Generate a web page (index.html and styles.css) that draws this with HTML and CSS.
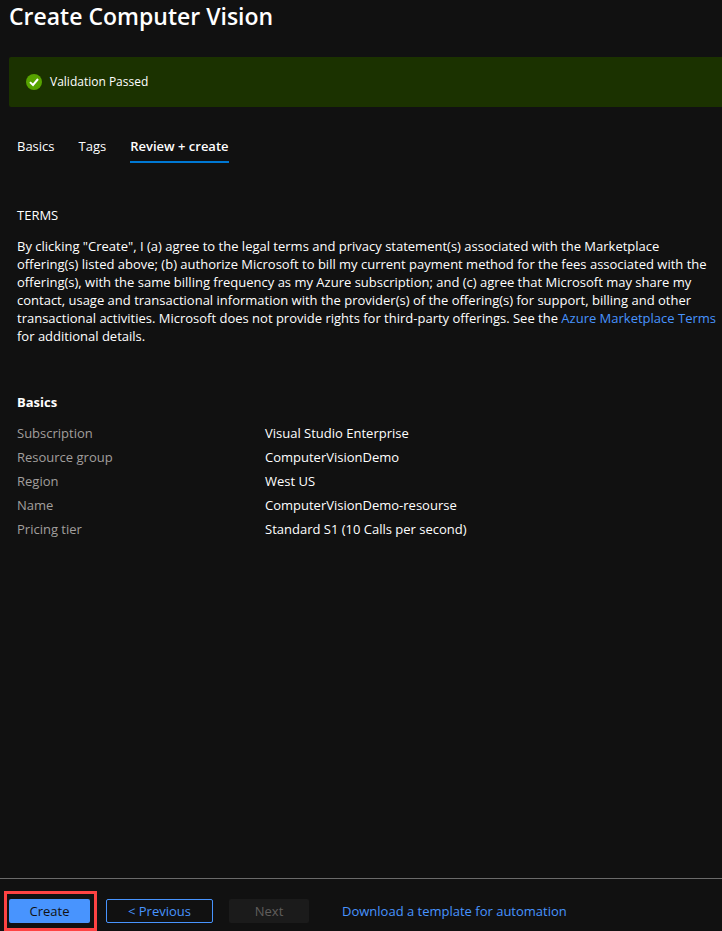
FILE: index.html
```html
<!DOCTYPE html>
<html lang="en">
<head>
<meta charset="utf-8">
<meta name="viewport" content="width=device-width, initial-scale=1">
<title>Create Computer Vision</title>
<link rel="stylesheet" href="styles.css">
</head>
<body>
<div class="page">
  <header class="header">
    <h1 class="title">Create Computer Vision</h1>
    <div class="banner" role="status">
      <svg class="banner-icon" viewBox="0 0 16 16" aria-hidden="true">
        <circle cx="8" cy="8" r="8" fill="#57a300"/>
        <path d="M4 8.1 7 11 12 5" fill="none" stroke="#fff" stroke-width="2"/>
      </svg>
      <span class="banner-text">Validation Passed</span>
    </div>
  </header>
  <main class="content">
    <nav class="tabs" aria-label="Steps">
      <a class="tab" href="#basics">Basics</a>
      <a class="tab" href="#tags">Tags</a>
      <a class="tab tab-active" href="#review" aria-current="step">Review + create</a>
    </nav>
    <section class="terms">
      <h2 class="terms-title">TERMS</h2>
      <p class="terms-text">By clicking "Create", I (a) agree to the legal terms and privacy statement(s) associated with the Marketplace<br>
      offering(s) listed above; (b) authorize Microsoft to bill my current payment method for the fees associated with the<br>
      offering(s), with the same billing frequency as my Azure subscription; and (c) agree that Microsoft may share my<br>
      contact, usage and transactional information with the provider(s) of the offering(s) for support, billing and other<br>
      transactional activities. Microsoft does not provide rights for third-party offerings. See the <a class="link" href="#marketplace-terms">Azure Marketplace Terms</a><br>
      for additional details.</p>
    </section>
    <section class="summary">
      <h2 class="summary-title">Basics</h2>
      <dl class="details">
        <dt>Subscription</dt><dd>Visual Studio Enterprise</dd>
        <dt>Resource group</dt><dd>ComputerVisionDemo</dd>
        <dt>Region</dt><dd>West US</dd>
        <dt>Name</dt><dd>ComputerVisionDemo-resourse</dd>
        <dt>Pricing tier</dt><dd>Standard S1 (10 Calls per second)</dd>
      </dl>
    </section>
  </main>
  <footer class="footer">
    <div class="highlight"><button class="button button-primary" type="button">Create</button></div>
    <button class="button button-secondary" type="button">&lt; Previous</button>
    <button class="button button-next" type="button" disabled>Next</button>
    <a class="link footer-link" href="#template">Download a template for automation</a>
  </footer>
</div>
</body>
</html>
```
FILE: styles.css
```css
* {
  box-sizing: border-box;
}

body {
  margin: 0;
  background: #111111;
  color: #ffffff;
  font: 13px/18px "Open Sans", "Noto Sans", sans-serif;
}

h1, h2, p, dl, dd {
  margin: 0;
}

.page {
  display: flex;
  flex-direction: column;
  min-height: 100vh;
}

.header {
  padding-left: 9px;
}

.title {
  padding-bottom: 24px;
  font-size: 23px;
  line-height: 33px;
  font-weight: 600;
}

.banner {
  display: flex;
  align-items: center;
  gap: 8px;
  min-height: 50px;
  padding: 0 17px;
  border-radius: 2px 0 0 2px;
  background: #1b3200;
}

.banner-icon {
  width: 16px;
  height: 16px;
}

.banner-text {
  font-size: 12px;
}

.content {
  flex: 1;
  padding: 30px 0 24px 17px;
}

.tabs {
  display: flex;
  gap: 24px;
}

.tab {
  padding-bottom: 6px;
  border-bottom: 2px solid transparent;
  color: #ffffff;
  text-decoration: none;
}

.tab-active {
  border-color: #0078d4;
  font-weight: 600;
}

.terms {
  padding-top: 43px;
}

.terms-title {
  padding-bottom: 13px;
  font-size: 13px;
  font-weight: 400;
}

.link {
  color: #4894fe;
  text-decoration: none;
}

.summary {
  padding-top: 48px;
}

.summary-title {
  padding-bottom: 10px;
  font-size: 13px;
  font-weight: 700;
}

.details {
  display: grid;
  grid-template-columns: 248px 1fr;
  line-height: 24px;
}

.details dt {
  color: #a19f9d;
}

.footer {
  display: flex;
  align-items: center;
  gap: 16px;
  padding: 20px 9px 8px;
  border-top: 1px solid #6b6b6b;
}

.highlight {
  position: relative;
  display: flex;
}

.highlight::after {
  content: "";
  position: absolute;
  inset: -8px -7px -8px -5px;
  border: 3px solid #ff4343;
  pointer-events: none;
}

.button {
  height: 24px;
  padding: 0 16px;
  border: 1px solid transparent;
  border-radius: 2px;
  font: inherit;
}

.button-primary {
  min-width: 81px;
  background: #4894fe;
  color: #111111;
}

.button-secondary {
  min-width: 107px;
  border-color: #4894fe;
  background: transparent;
  color: #4894fe;
}

.button-next {
  min-width: 80px;
  background: #1b1b1b;
  color: #605e5c;
}

.footer-link {
  padding-left: 17px;
}
```
